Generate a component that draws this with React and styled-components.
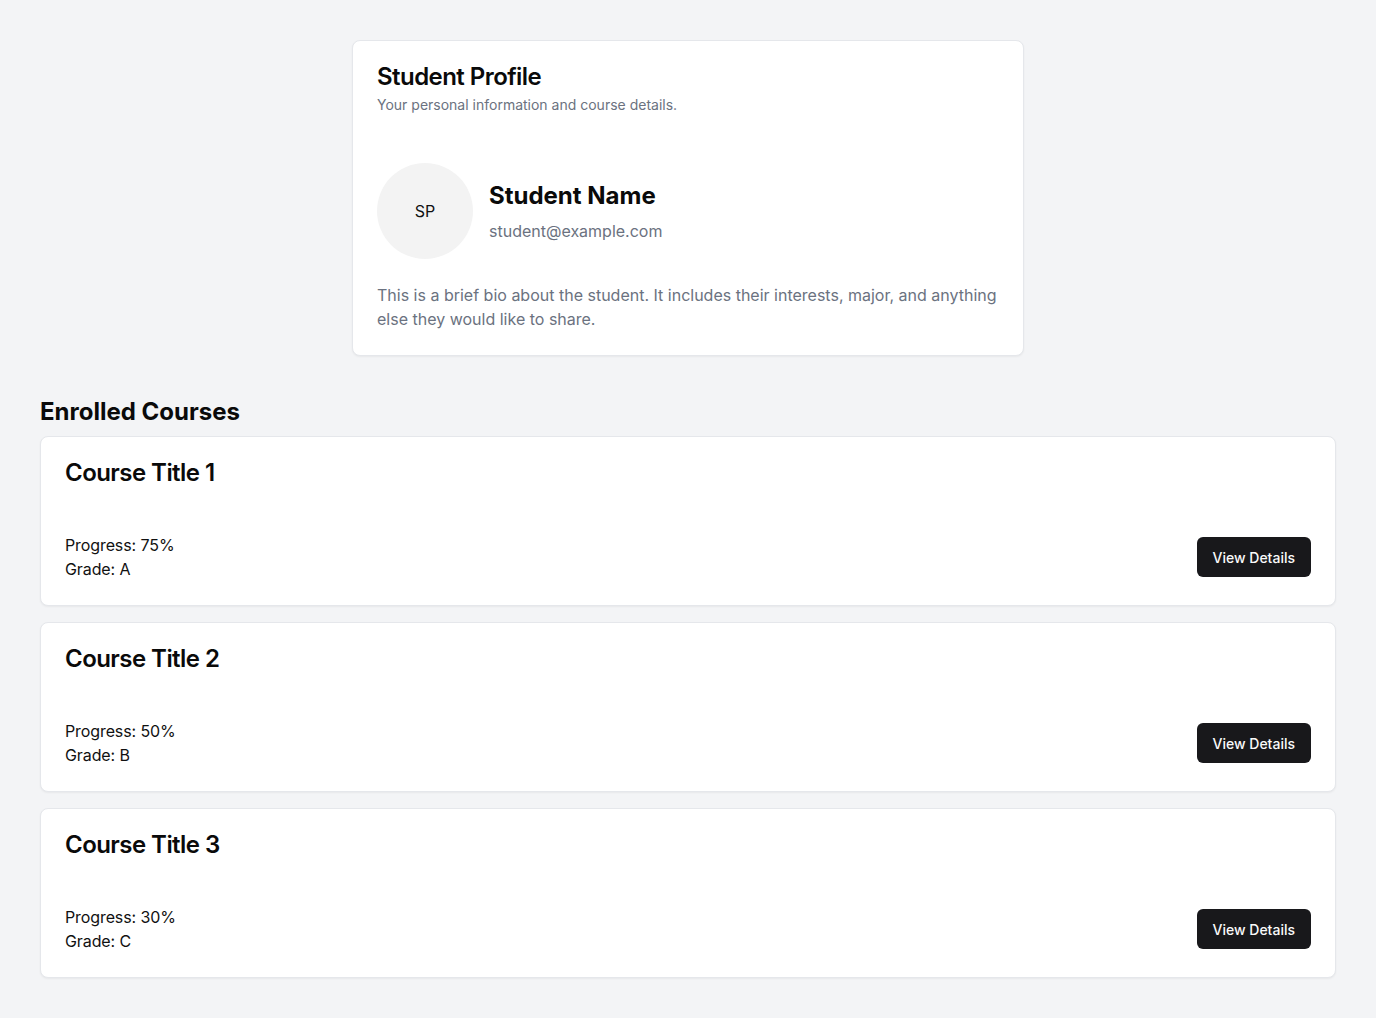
import React from 'react';
import styled, { createGlobalStyle } from 'styled-components';

const GlobalStyle = createGlobalStyle`
  * {
    box-sizing: border-box;
  }
  body {
    margin: 0;
    background: #f3f4f6;
    font-family: Inter, "Noto Sans", sans-serif;
    color: #0a0a0a;
  }
`;

const Page = styled.div`
  padding: 40px;
  min-height: 1018px;
`;

const Card = styled.div`
  background: #ffffff;
  border: 1px solid #e5e7eb;
  border-radius: 8px;
  box-shadow: 0 1px 2px rgba(0, 0, 0, 0.05);
`;

const ProfileCard = styled(Card)`
  max-width: 672px;
  margin: 0 auto;
  padding: 24px;
`;

const Header = styled.div`
  display: flex;
  flex-direction: column;
  gap: 6px;
`;

const Title = styled.h2`
  margin: 0;
  font-size: 24px;
  line-height: 24px;
  font-weight: 600;
  letter-spacing: -0.55px;
`;

const Description = styled.p`
  margin: 0;
  font-size: 14px;
  line-height: 20px;
  color: #6b7280;
`;

const ProfileRow = styled.div`
  display: flex;
  align-items: center;
  gap: 16px;
  margin-top: 48px;
`;

const Avatar = styled.div`
  width: 96px;
  height: 96px;
  border-radius: 50%;
  background: #f3f3f3;
  display: flex;
  align-items: center;
  justify-content: center;
  font-size: 16px;
  color: #111;
`;

const NameBlock = styled.div`
  display: flex;
  flex-direction: column;
  gap: 7px;
`;

const Name = styled.h3`
  margin: 0;
  font-size: 24px;
  line-height: 32px;
  font-weight: 700;
`;

const Email = styled.p`
  margin: 0;
  font-size: 16px;
  line-height: 24px;
  color: #6b7280;
`;

const Bio = styled.p`
  margin: 24px 0 0;
  font-size: 16px;
  line-height: 24px;
  color: #6b7280;
`;

const SectionTitle = styled.h2`
  margin: 40px 0 8px;
  font-size: 24px;
  line-height: 32px;
  font-weight: 700;
  letter-spacing: 0;
`;

const CourseList = styled.div`
  display: flex;
  flex-direction: column;
  gap: 16px;
`;

const CourseCard = styled(Card)`
  padding: 24px;
  display: flex;
  flex-direction: column;
  gap: 48px;
`;

const CourseFooter = styled.div`
  display: flex;
  align-items: center;
  justify-content: space-between;
`;

const Stats = styled.div`
  font-size: 16px;
  line-height: 24px;
  color: #111;
  letter-spacing: -0.1px;
`;

const Button = styled.button`
  height: 40px;
  padding: 0 16px;
  border: none;
  border-radius: 6px;
  background: #18181b;
  color: #fafafa;
  font-family: inherit;
  font-size: 14px;
  font-weight: 500;
  cursor: pointer;
`;

const courses = [
  { title: 'Course Title 1', progress: 75, grade: 'A' },
  { title: 'Course Title 2', progress: 50, grade: 'B' },
  { title: 'Course Title 3', progress: 30, grade: 'C' },
];

export default function App() {
  return (
    <Page>
      <GlobalStyle />
      <ProfileCard>
        <Header>
          <Title>Student Profile</Title>
          <Description>Your personal information and course details.</Description>
        </Header>
        <ProfileRow>
          <Avatar>SP</Avatar>
          <NameBlock>
            <Name>Student Name</Name>
            <Email>student@example.com</Email>
          </NameBlock>
        </ProfileRow>
        <Bio>
          This is a brief bio about the student. It includes their interests, major, and anything
          else they would like to share.
        </Bio>
      </ProfileCard>

      <SectionTitle>Enrolled Courses</SectionTitle>
      <CourseList>
        {courses.map(course => (
          <CourseCard key={course.title}>
            <Title>{course.title}</Title>
            <CourseFooter>
              <Stats>
                <div>Progress: {course.progress}%</div>
                <div>Grade: {course.grade}</div>
              </Stats>
              <Button>View Details</Button>
            </CourseFooter>
          </CourseCard>
        ))}
      </CourseList>
    </Page>
  );
}
